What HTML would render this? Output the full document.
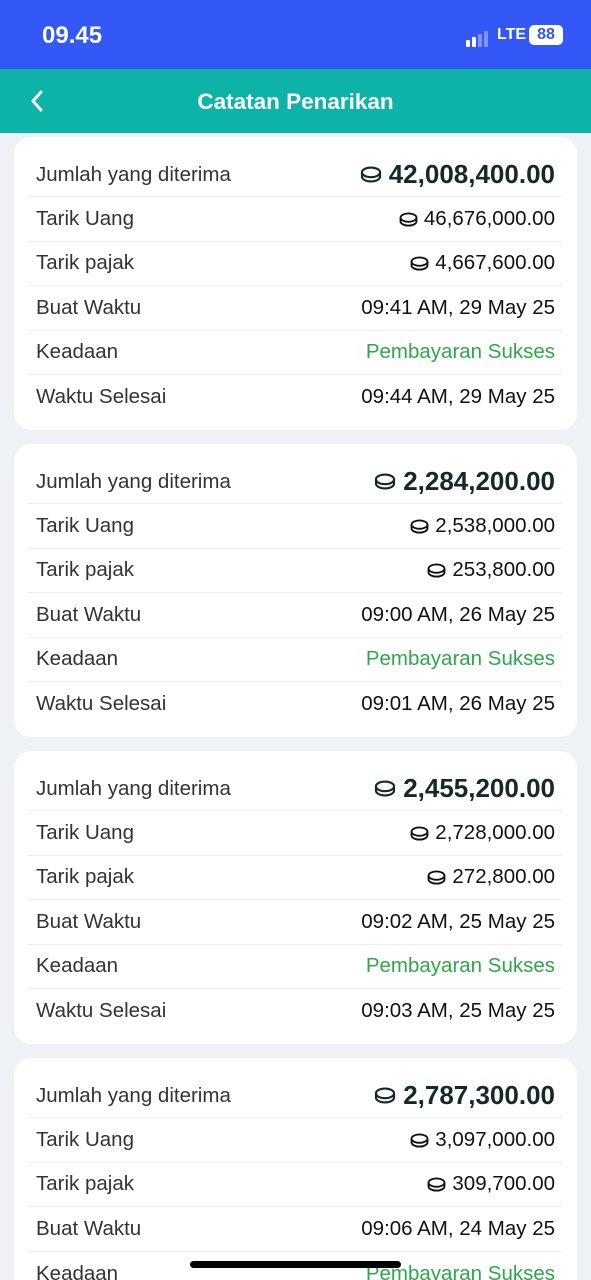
<!DOCTYPE html>
<html><head><meta charset="utf-8"><style>
*{margin:0;padding:0;box-sizing:border-box}
html,body{width:591px;height:1280px;overflow:hidden}
body{background:#eef1f6;font-family:"Liberation Sans",sans-serif;position:relative}
.sb{position:absolute;top:0;left:0;width:591px;height:69px;background:#3358f7;color:#fff}
.time{position:absolute;left:42px;top:22px;font-size:24px;font-weight:bold}
.hd{position:absolute;top:69px;left:0;width:591px;height:64px;background:#0db3a6;color:#fff}
.hd .t{position:absolute;left:0;right:0;top:20px;text-align:center;font-size:22.5px;font-weight:bold}
.card{position:absolute;left:14px;width:563px;height:293px;background:#fff;border-radius:17px;padding-top:16px;overflow:hidden}
.row{height:44.4px;margin:0 14px;border-bottom:1px solid #eceef1;display:flex;align-items:center;justify-content:space-between;padding:0 8px;font-size:20.5px;color:#333}
.row:last-child{border-bottom:none}
.v{color:#111;display:flex;align-items:center;gap:6px}
.big{font-weight:bold;font-size:26px;color:#15282a;gap:7px}
.g{color:#2ea64a}
svg{display:block}
.bar{position:absolute;left:190px;top:1261px;width:211px;height:7px;border-radius:4px;background:#000}
</style></head><body>
<div class="sb"><div class="time">09.45</div>
<div style="position:absolute;left:466px;top:31px;display:flex;align-items:flex-end;gap:2px">
<div style="width:4px;height:7px;background:#fff;border-radius:1px"></div><div style="width:4px;height:10px;background:#fff;border-radius:1px"></div><div style="width:4px;height:13px;background:#7d95fa;border-radius:1px"></div><div style="width:4px;height:16px;background:#7d95fa;border-radius:1px"></div></div>
<div style="position:absolute;left:497px;top:26px;font-size:16px;font-weight:bold">LTE</div>
<div style="position:absolute;left:529px;top:25px;width:34px;height:20px;background:#fff;border-radius:5px;color:#3358f7;font-size:16px;font-weight:bold;text-align:center;line-height:20px">88</div>
</div>
<div class="hd"><svg style="position:absolute;left:30px;top:21px" width="14" height="22" viewBox="0 0 14 22"><path d="M11 2L3 11l8 9" fill="none" stroke="#fff" stroke-width="3" stroke-linecap="round" stroke-linejoin="round"/></svg><div class="t">Catatan Penarikan</div></div>

<div class="card" style="top:137px">
<div class="row"><span>Jumlah yang diterima</span><span class="v big"><svg width="22" height="17" viewBox="0 0 20 16"><ellipse cx="10" cy="6" rx="8.5" ry="4.5" fill="none" stroke="#15282a" stroke-width="2"/><path d="M1.5 6v4c0 2.5 3.8 4.5 8.5 4.5s8.5-2 8.5-4.5V6" fill="none" stroke="#15282a" stroke-width="2"/></svg>42,008,400.00</span></div>
<div class="row"><span>Tarik Uang</span><span class="v"><svg width="19" height="15" viewBox="0 0 20 16"><ellipse cx="10" cy="6" rx="8.5" ry="4.5" fill="none" stroke="#111" stroke-width="2"/><path d="M1.5 6v4c0 2.5 3.8 4.5 8.5 4.5s8.5-2 8.5-4.5V6" fill="none" stroke="#111" stroke-width="2"/></svg>46,676,000.00</span></div>
<div class="row"><span>Tarik pajak</span><span class="v"><svg width="19" height="15" viewBox="0 0 20 16"><ellipse cx="10" cy="6" rx="8.5" ry="4.5" fill="none" stroke="#111" stroke-width="2"/><path d="M1.5 6v4c0 2.5 3.8 4.5 8.5 4.5s8.5-2 8.5-4.5V6" fill="none" stroke="#111" stroke-width="2"/></svg>4,667,600.00</span></div>
<div class="row"><span>Buat Waktu</span><span class="v">09:41 AM, 29 May 25</span></div>
<div class="row"><span>Keadaan</span><span class="v g">Pembayaran Sukses</span></div>
<div class="row"><span>Waktu Selesai</span><span class="v">09:44 AM, 29 May 25</span></div>
</div>

<div class="card" style="top:444px">
<div class="row"><span>Jumlah yang diterima</span><span class="v big"><svg width="22" height="17" viewBox="0 0 20 16"><ellipse cx="10" cy="6" rx="8.5" ry="4.5" fill="none" stroke="#15282a" stroke-width="2"/><path d="M1.5 6v4c0 2.5 3.8 4.5 8.5 4.5s8.5-2 8.5-4.5V6" fill="none" stroke="#15282a" stroke-width="2"/></svg>2,284,200.00</span></div>
<div class="row"><span>Tarik Uang</span><span class="v"><svg width="19" height="15" viewBox="0 0 20 16"><ellipse cx="10" cy="6" rx="8.5" ry="4.5" fill="none" stroke="#111" stroke-width="2"/><path d="M1.5 6v4c0 2.5 3.8 4.5 8.5 4.5s8.5-2 8.5-4.5V6" fill="none" stroke="#111" stroke-width="2"/></svg>2,538,000.00</span></div>
<div class="row"><span>Tarik pajak</span><span class="v"><svg width="19" height="15" viewBox="0 0 20 16"><ellipse cx="10" cy="6" rx="8.5" ry="4.5" fill="none" stroke="#111" stroke-width="2"/><path d="M1.5 6v4c0 2.5 3.8 4.5 8.5 4.5s8.5-2 8.5-4.5V6" fill="none" stroke="#111" stroke-width="2"/></svg>253,800.00</span></div>
<div class="row"><span>Buat Waktu</span><span class="v">09:00 AM, 26 May 25</span></div>
<div class="row"><span>Keadaan</span><span class="v g">Pembayaran Sukses</span></div>
<div class="row"><span>Waktu Selesai</span><span class="v">09:01 AM, 26 May 25</span></div>
</div>

<div class="card" style="top:751px">
<div class="row"><span>Jumlah yang diterima</span><span class="v big"><svg width="22" height="17" viewBox="0 0 20 16"><ellipse cx="10" cy="6" rx="8.5" ry="4.5" fill="none" stroke="#15282a" stroke-width="2"/><path d="M1.5 6v4c0 2.5 3.8 4.5 8.5 4.5s8.5-2 8.5-4.5V6" fill="none" stroke="#15282a" stroke-width="2"/></svg>2,455,200.00</span></div>
<div class="row"><span>Tarik Uang</span><span class="v"><svg width="19" height="15" viewBox="0 0 20 16"><ellipse cx="10" cy="6" rx="8.5" ry="4.5" fill="none" stroke="#111" stroke-width="2"/><path d="M1.5 6v4c0 2.5 3.8 4.5 8.5 4.5s8.5-2 8.5-4.5V6" fill="none" stroke="#111" stroke-width="2"/></svg>2,728,000.00</span></div>
<div class="row"><span>Tarik pajak</span><span class="v"><svg width="19" height="15" viewBox="0 0 20 16"><ellipse cx="10" cy="6" rx="8.5" ry="4.5" fill="none" stroke="#111" stroke-width="2"/><path d="M1.5 6v4c0 2.5 3.8 4.5 8.5 4.5s8.5-2 8.5-4.5V6" fill="none" stroke="#111" stroke-width="2"/></svg>272,800.00</span></div>
<div class="row"><span>Buat Waktu</span><span class="v">09:02 AM, 25 May 25</span></div>
<div class="row"><span>Keadaan</span><span class="v g">Pembayaran Sukses</span></div>
<div class="row"><span>Waktu Selesai</span><span class="v">09:03 AM, 25 May 25</span></div>
</div>

<div class="card" style="top:1058px;height:222px;border-radius:17px 17px 0 0">
<div class="row"><span>Jumlah yang diterima</span><span class="v big"><svg width="22" height="17" viewBox="0 0 20 16"><ellipse cx="10" cy="6" rx="8.5" ry="4.5" fill="none" stroke="#15282a" stroke-width="2"/><path d="M1.5 6v4c0 2.5 3.8 4.5 8.5 4.5s8.5-2 8.5-4.5V6" fill="none" stroke="#15282a" stroke-width="2"/></svg>2,787,300.00</span></div>
<div class="row"><span>Tarik Uang</span><span class="v"><svg width="19" height="15" viewBox="0 0 20 16"><ellipse cx="10" cy="6" rx="8.5" ry="4.5" fill="none" stroke="#111" stroke-width="2"/><path d="M1.5 6v4c0 2.5 3.8 4.5 8.5 4.5s8.5-2 8.5-4.5V6" fill="none" stroke="#111" stroke-width="2"/></svg>3,097,000.00</span></div>
<div class="row"><span>Tarik pajak</span><span class="v"><svg width="19" height="15" viewBox="0 0 20 16"><ellipse cx="10" cy="6" rx="8.5" ry="4.5" fill="none" stroke="#111" stroke-width="2"/><path d="M1.5 6v4c0 2.5 3.8 4.5 8.5 4.5s8.5-2 8.5-4.5V6" fill="none" stroke="#111" stroke-width="2"/></svg>309,700.00</span></div>
<div class="row"><span>Buat Waktu</span><span class="v">09:06 AM, 24 May 25</span></div>
<div class="row"><span>Keadaan</span><span class="v g">Pembayaran Sukses</span></div>
</div>
<div class="bar"></div>
</body></html>
